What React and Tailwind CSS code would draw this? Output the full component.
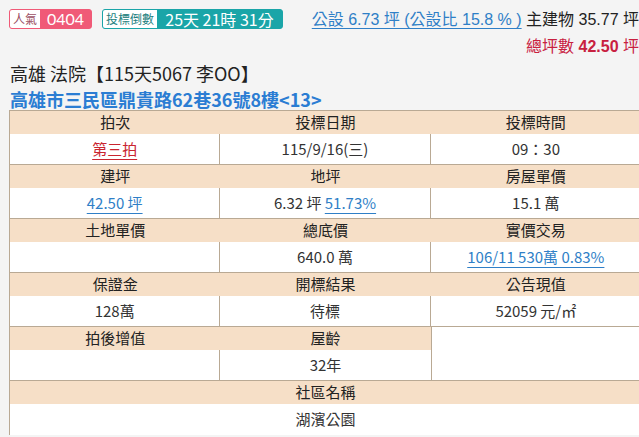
import React from 'react';

const cjk = { fontFamily: '"Noto Sans CJK TC", "Noto Sans", sans-serif' };
const latin = { fontFamily: '"Liberation Sans", "Noto Sans CJK TC", sans-serif' };

function Head({ children, className = '' }) {
  return (
    <div className={`h-[23px] bg-[#f6dfc7] flex items-center justify-center text-[15px] text-[#222] ${className}`}>
      {children}
    </div>
  );
}

function Val({ children, className = '' }) {
  return (
    <div className={`h-[31px] bg-white flex items-center justify-center text-[15px] text-[#333] border-b border-[#b9a994] ${className}`}>
      {children}
    </div>
  );
}

const link = 'text-[#2f7fc7] underline underline-offset-[4px] decoration-[#2f7fc7]';

export default function App() {
  const rows = [
    [['拍次', <span className="text-[#c9252f] underline underline-offset-[4px]">第三拍</span>], ['投標日期', '115/9/16(三)'], ['投標時間', '09：30']],
    [['建坪', <span className={link}>42.50 坪</span>], ['地坪', <span>6.32 坪 <span className={link}>51.73%</span></span>], ['房屋單價', '15.1 萬']],
    [['土地單價', ''], ['總底價', '640.0 萬'], ['實價交易', <span className={link}>106/11 530萬 0.83%</span>]],
    [['保證金', '128萬'], ['開標結果', '待標'], ['公告現值', '52059 元/㎡']],
  ];

  return (
    <div className="w-[639px] h-[437px] bg-[#f4f4f4] overflow-hidden" style={cjk}>
      {/* top badges + areas */}
      <div className="flex items-start pt-[9px] pl-[9px]">
        <div className="flex h-[20px] rounded-[3px] border border-[#f05a77] bg-[#f05a77] leading-none">
          <span className="w-[30px] rounded-l-[2px] bg-white text-[#9c5064] text-[12px] flex items-center justify-center">人氣</span>
          <span className="w-[51px] text-white text-[16px] flex items-center justify-center" style={{ fontFamily: 'Lato, sans-serif' }}>0404</span>
        </div>
        <div className="flex h-[20px] ml-[10px] rounded-[3px] border border-[#1aa5a8] bg-[#1aa5a8] leading-none">
          <span className="w-[54px] rounded-l-[2px] bg-white text-[#237f80] text-[12px] flex items-center justify-center">投標倒數</span>
          <span className="w-[125px] text-white text-[16px] flex items-center justify-center whitespace-nowrap">25天 21時 31分</span>
        </div>
        <div className="ml-auto flex flex-col items-end mt-[1px]" style={latin}>
          <div className="text-[16px] leading-[20px] whitespace-nowrap">
            <span className="text-[#2f7fc7] underline underline-offset-[3px]">公設 6.73 坪 (公設比 15.8 % )</span>
            <span className="text-[#222]"> 主建物 35.77 坪</span>
          </div>
          <div className="text-[16px] leading-[20px] mt-[7px] text-[#c8203f] whitespace-nowrap">
            總坪數 <b>42.50</b> 坪
          </div>
        </div>
      </div>

      {/* title */}
      <div className="pl-[10px] mt-[5px] text-[18px] leading-[22px] text-[#222] whitespace-nowrap">高雄 法院【115天5067 李OO】</div>
      <div className="pl-[10px] mt-[5px] text-[18px] leading-[21px] font-bold text-[#2b7dd3] whitespace-nowrap">高雄市三民區鼎貴路62巷36號8樓&lt;13&gt;</div>

      {/* table */}
      <div className="ml-[9px] w-[632px] grid grid-cols-3 border-t border-l border-[#b9a994]">
        {rows.map((row, i) => (
          <React.Fragment key={i}>
            {row.map(([h], j) => (
              <Head key={'h' + j}>{h}</Head>
            ))}
            {row.map(([, v], j) => (
              <Val key={'v' + j} className={j < 2 ? 'border-r' : ''}>{v}</Val>
            ))}
          </React.Fragment>
        ))}
        <Head className="col-start-1 row-start-9">拍後增值</Head>
        <Head className="col-start-2 row-start-9">屋齡</Head>
        <div className="col-start-3 row-start-9 row-span-2 bg-white border-l border-b border-[#b9a994]" />
        <Val className="col-start-1 row-start-10 border-r">{''}</Val>
        <Val className="col-start-2 row-start-10">32年</Val>
        <Head className="col-span-3">社區名稱</Head>
        <Val className="col-span-3 border-b-0">湖濱公園</Val>
      </div>
    </div>
  );
}
